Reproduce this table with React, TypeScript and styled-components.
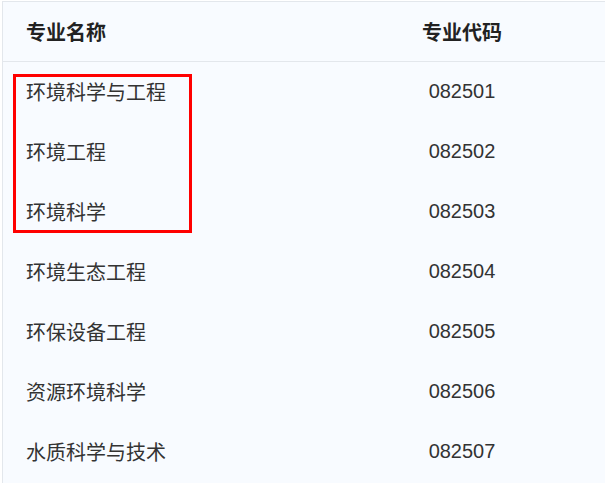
import React from "react";
import styled, { createGlobalStyle } from "styled-components";

const GlobalStyle = createGlobalStyle`
  html, body {
    margin: 0;
    padding: 0;
    background: #ffffff;
  }
  body {
    font-family: "Liberation Sans", Arial, "Noto Sans CJK SC", sans-serif;
  }
`;

const Page = styled.div`
  position: relative;
  padding: 1px 0 0 2px;
  height: 482px;
  overflow: hidden;
`;

const Table = styled.div`
  background: #f8fbff;
  border-top: 1px solid #e3e7ec;
  border-left: 1px solid #e3e7ec;
  min-height: 482px;
`;

const Row = styled.div<{ $head?: boolean }>`
  display: grid;
  grid-template-columns: 316px 1fr;
  height: 60px;
  box-sizing: border-box;
  padding-bottom: ${({ $head }) => ($head ? "0" : "1px")};
  align-items: center;
  border-bottom: ${({ $head }) => ($head ? "1px solid #e3e7ec" : "none")};
  font-size: 20px;
  font-weight: ${({ $head }) => ($head ? 700 : 400)};
  color: ${({ $head }) => ($head ? "#222222" : "#333333")};
`;

const NameCell = styled.div`
  padding-left: 23px;
  white-space: nowrap;
`;

const CodeCell = styled.div`
  text-align: center;
  white-space: nowrap;
`;

// red annotation box drawn over the first three rows
const Highlight = styled.div`
  position: absolute;
  left: 13px;
  top: 74px;
  width: 173px;
  height: 153px;
  border: 3px solid #ff0000;
  pointer-events: none;
`;

const majors = [
  { name: "环境科学与工程", code: "082501" },
  { name: "环境工程", code: "082502" },
  { name: "环境科学", code: "082503" },
  { name: "环境生态工程", code: "082504" },
  { name: "环保设备工程", code: "082505" },
  { name: "资源环境科学", code: "082506" },
  { name: "水质科学与技术", code: "082507" },
];

const App = () => {
  return (
    <>
      <GlobalStyle />
      <Page>
        <Table>
          <Row $head>
            <NameCell>专业名称</NameCell>
            <CodeCell>专业代码</CodeCell>
          </Row>
          {majors.map((m) => (
            <Row key={m.code}>
              <NameCell>{m.name}</NameCell>
              <CodeCell>{m.code}</CodeCell>
            </Row>
          ))}
        </Table>
        <Highlight />
      </Page>
    </>
  );
};

export default App;
